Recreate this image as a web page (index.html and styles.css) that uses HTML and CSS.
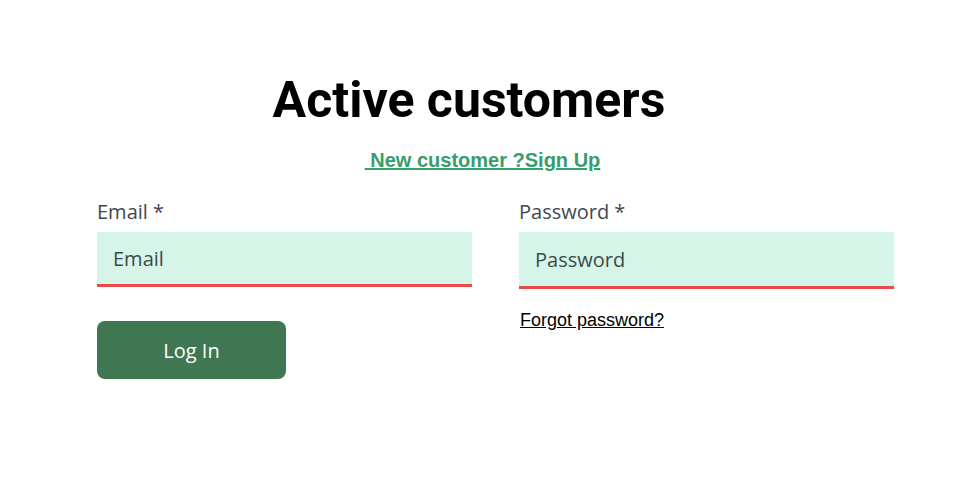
FILE: index.html
```html
<!DOCTYPE html>
<html lang="en">
<head>
<meta charset="utf-8">
<title>Active customers</title>
<link rel="stylesheet" href="styles.css">
</head>
<body>
<main class="page">
  <h1 class="title">Active customers</h1>
  <p class="signup"><a href="#" class="signup-link">&nbsp;New customer ?Sign Up</a></p>
  <form class="login-form">
    <div class="field">
      <label class="field-label" for="email">Email *</label>
      <input class="field-input" id="email" type="text" placeholder="Email">
      <button type="button" class="login-btn">Log In</button>
    </div>
    <div class="field">
      <label class="field-label" for="password">Password *</label>
      <input class="field-input field-input--tall" id="password" type="password" placeholder="Password">
      <a href="#" class="forgot-link">Forgot password?</a>
    </div>
  </form>
</main>
</body>
</html>
```

FILE: styles.css
```css
html, body {
  margin: 0;
  padding: 0;
  background: #ffffff;
}

.page {
  padding-top: 70px;
}

.title {
  margin: 0;
  padding-right: 27px;
  text-align: center;
  font-family: Roboto, "Liberation Sans", sans-serif;
  font-weight: 700;
  font-size: 50px;
  line-height: 60px;
  color: #000000;
}

.signup {
  margin: 18px 0 0;
  text-align: center;
  font-family: "Liberation Sans", Arial, sans-serif;
  font-weight: 700;
  font-size: 20px;
  line-height: 24px;
}

.signup-link {
  color: #379d6b;
  text-decoration: underline;
}

.login-form {
  display: grid;
  grid-template-columns: 375px 375px;
  column-gap: 47px;
  margin: 26px 0 0 97px;
}

.field {
  display: flex;
  flex-direction: column;
  align-items: flex-start;
}

.field-label {
  font-family: "Open Sans", sans-serif;
  font-size: 20px;
  line-height: 27px;
  color: #3f4750;
  margin-bottom: 7px;
}

.field-input {
  box-sizing: border-box;
  width: 100%;
  height: 55px;
  margin: 0;
  padding: 0 16px;
  border: none;
  border-bottom: 3px solid #e84a4a;
  background: #d5f5e8;
  font-family: "Open Sans", sans-serif;
  font-size: 20px;
  color: #3d4a4a;
  outline: none;
}

.field-input::placeholder {
  color: #3d4a4a;
  opacity: 1;
}

.field-input--tall {
  height: 57px;
}

.login-btn {
  margin-top: 34px;
  width: 189px;
  height: 58px;
  border: none;
  border-radius: 8px;
  background: #3f7752;
  color: #ffffff;
  font-family: "Open Sans", sans-serif;
  font-size: 20px;
  cursor: pointer;
}

.forgot-link {
  margin-top: 21px;
  margin-left: 1px;
  font-family: "Liberation Sans", Arial, sans-serif;
  font-size: 18px;
  line-height: 21px;
  color: #000000;
  text-decoration: underline;
}
```
